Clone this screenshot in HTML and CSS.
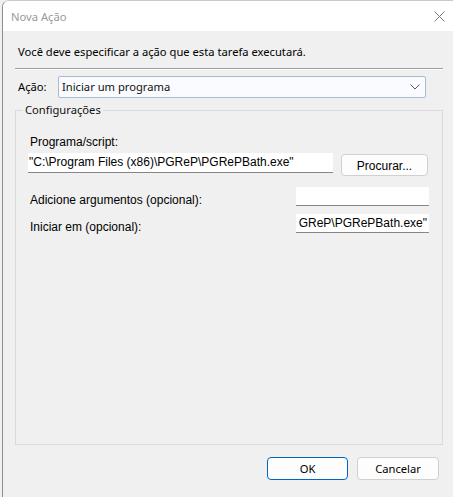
FILE: index.html
```html
<!DOCTYPE html>
<html lang="pt">
<head>
<meta charset="utf-8">
<title>Nova Ação</title>
<link rel="stylesheet" href="styles.css">
</head>
<body>
<div class="window">
  <div class="titlebar">
    <span class="title">Nova Ação</span>
    <svg class="close" width="11" height="11" viewBox="0 0 11 11"><path d="M0.5 0.5 L10.5 10.5 M10.5 0.5 L0.5 10.5" stroke="#7a7a7a" stroke-width="1" fill="none"/></svg>
  </div>
  <div class="content">
    <p class="intro">Você deve especificar a ação que esta tarefa executará.</p>
    <div class="sep"></div>
    <div class="action-row">
      <span class="label-ui">Ação:</span>
      <div class="select">
        <span>Iniciar um programa</span>
        <svg width="10" height="6" viewBox="0 0 10 6"><path d="M0.5 0.5 L5 5 L9.5 0.5" stroke="#5a5a5a" stroke-width="1" fill="none"/></svg>
      </div>
    </div>
    <fieldset class="group">
      <legend>Configurações</legend>
      <div class="field-label">Programa/script:</div>
      <div class="prog-row">
        <div class="input wide">"C:\Program Files (x86)\PGReP\PGRePBath.exe"</div>
        <button class="btn browse">Procurar...</button>
      </div>
      <div class="opt-row first">
        <span class="opt-label">Adicione argumentos (opcional):</span>
        <div class="input narrow"></div>
      </div>
      <div class="opt-row">
        <span class="opt-label">Iniciar em (opcional):</span>
        <div class="input narrow scrolled">GReP\PGRePBath.exe"</div>
      </div>
    </fieldset>
    <div class="buttons">
      <button class="btn dlg default">OK</button>
      <button class="btn dlg">Cancelar</button>
    </div>
  </div>
</div>
</body>
</html>
```
FILE: styles.css
```css
* { box-sizing: border-box; }
html, body {
  margin: 0;
  padding: 0;
  background: #f0f0f0;
  width: 453px;
  height: 497px;
  overflow: hidden;
}
body {
  font-family: "Noto Sans", "Open Sans", sans-serif;
  font-size: 11.2px;
  color: #000;
}
.window {
  margin-left: 2px;
  height: 497px;
  background: #f0f0f0;
  border-left: 1px solid #8c8c8c;
  border-top: 1px solid #c9c9c9;
  border-top-left-radius: 7px;
  overflow: hidden;
}
.titlebar {
  height: 30px;
  background: #fff;
  display: flex;
  align-items: center;
  justify-content: space-between;
  padding-left: 8px;
  padding-right: 8px;
}
.title {
  color: #9a9a9a;
  line-height: 16px;
  margin-top: 1px;
}
.close { display: block; }
.content {
  padding: 0 10px 0 12px;
}
.intro {
  margin: 13px 0 0 3px;
  line-height: 16px;
}
.sep {
  margin-top: 8px;
  height: 2px;
  border-top: 1px solid #a0a0a0;
  border-bottom: 1px solid #ffffff;
}
.action-row {
  margin-top: 6px;
  display: flex;
  align-items: center;
  padding-left: 3px;
  padding-right: 17px;
}
.label-ui {
  width: 40px;
  line-height: 16px;
}
.select {
  flex: 1;
  height: 22px;
  border: 1px solid #a9bad3;
  border-radius: 2px;
  background: #f9fbfe;
  display: flex;
  align-items: center;
  justify-content: space-between;
  padding: 0 5px 0 3px;
  color: #111;
  line-height: 16px;
}
.group {
  margin: 4px 0 0 0;
  padding: 0 13px 0 12px;
  border: 1px solid #dadada;
  height: 343px;
  min-width: 0;
}
.group legend {
  margin-left: -5px;
  padding: 0 2px;
  line-height: 16px;
  color: #111;
}
.field-label, .opt-label, .input, .btn.browse {
  font-family: "Liberation Sans", Arial, sans-serif;
  font-size: 12px;
}
.field-label {
  margin: 17px 0 0 2px;
  line-height: 14px;
}
.prog-row {
  display: flex;
  align-items: flex-start;
  gap: 8px;
  margin-top: 4px;
}
.input {
  background: #fff;
  border-bottom: 1px solid #858585;
  height: 20px;
  line-height: 19px;
  padding: 0 1px;
  white-space: nowrap;
  overflow: hidden;
}
.input.wide { width: 305px; }
.input.narrow { width: 133px; height: 19px; line-height: 18px; }
.scrolled {
  text-align: right;
  padding-right: 2px;
}
.btn {
  background: #fdfdfd;
  border: 1px solid #d0d0d0;
  border-radius: 4px;
  color: #000;
  padding: 0;
  margin: 0;
}
.btn.browse {
  width: 87px;
  height: 22px;
  margin-top: 1px;
  padding-top: 2px;
}
.opt-row {
  display: flex;
  justify-content: space-between;
  align-items: flex-end;
  margin-top: 8px;
  padding-left: 2px;
}
.opt-row.first { margin-top: 11px; }
.opt-label {
  line-height: 14px;
  margin-bottom: -1px;
}
.buttons {
  display: flex;
  justify-content: flex-end;
  gap: 9px;
  margin-top: 12px;
  padding-right: 4px;
}
.btn.dlg {
  width: 82px;
  height: 23px;
  font-family: "Noto Sans", "Open Sans", sans-serif;
  font-size: 11.2px;
  line-height: 16px;
}
.btn.default {
  width: 81px;
  border-color: #0067c0;
  background: #fdfdfd;
}
```
